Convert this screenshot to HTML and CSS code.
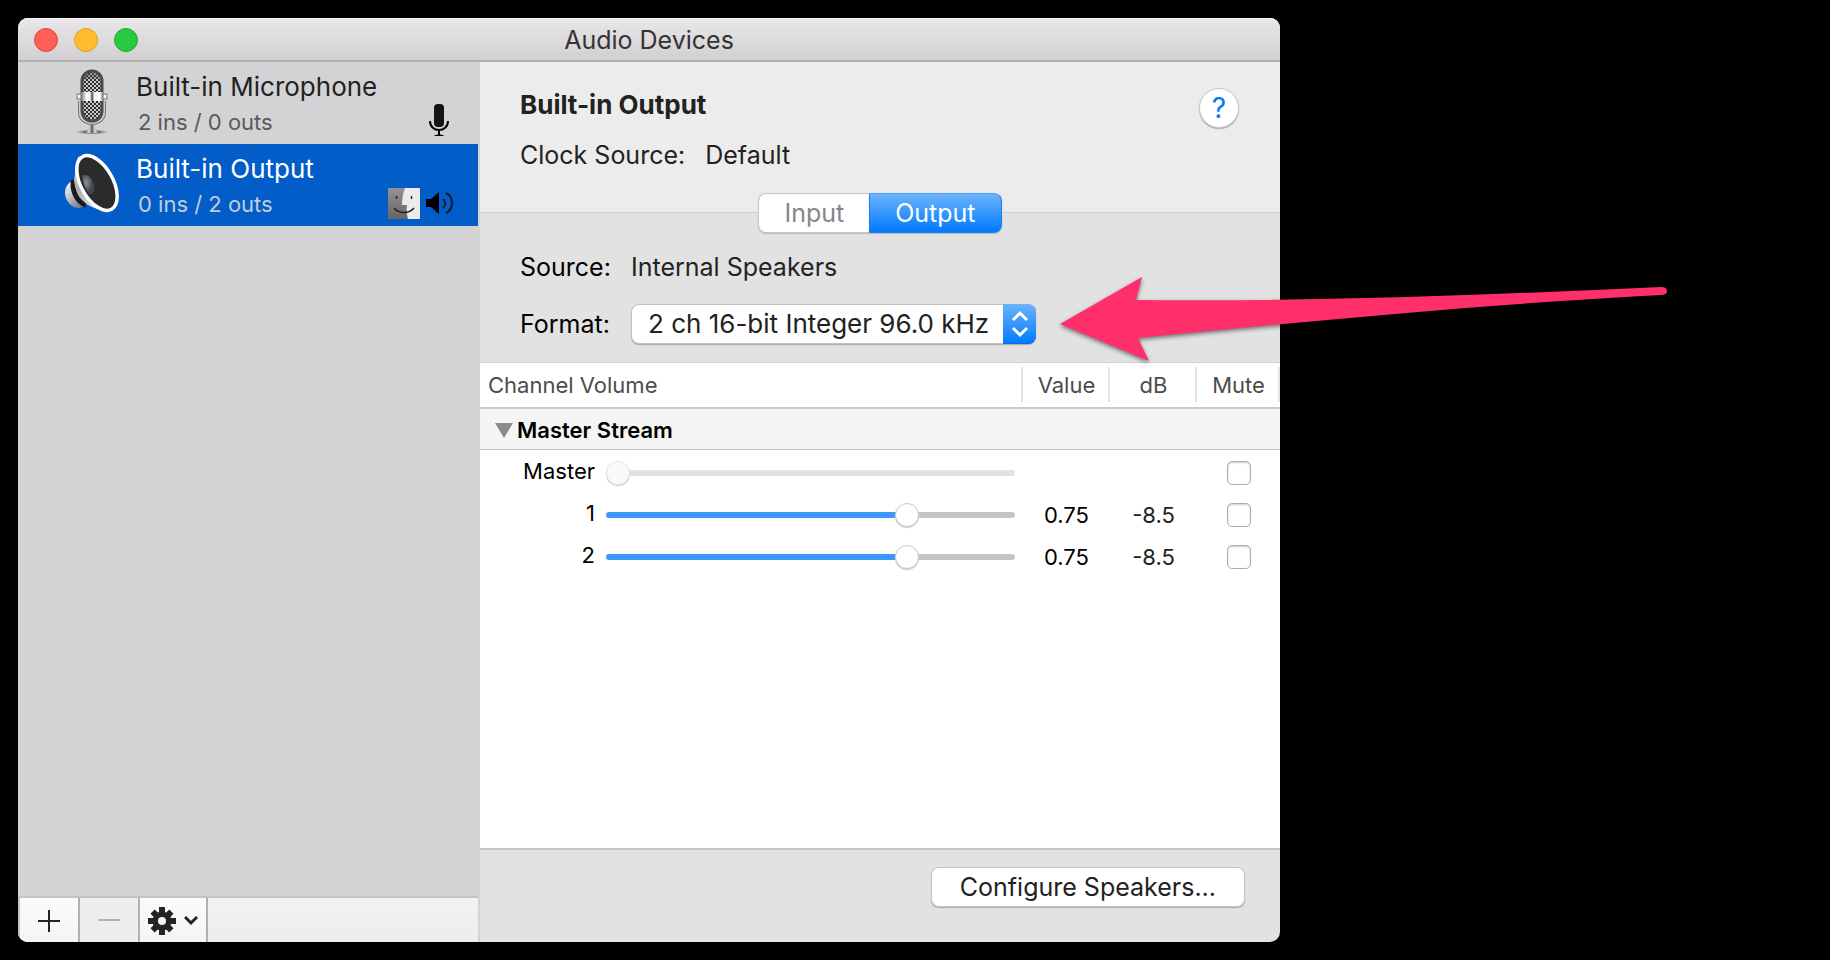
FILE: index.html
```
<!DOCTYPE html>
<html lang="en">
  <head>
    <title>Audio Devices</title>
    <meta charset="UTF-8">
    <meta name="viewport" content="width=device-width, initial-scale=1.0">
    <link rel="stylesheet" href="styles.css">
  </head>
  <body>
    <div class="window">
      <header class="titlebar">
        <div class="lights">
          <button class="light close" aria-label="Close"></button>
          <button class="light minimize" aria-label="Minimize"></button>
          <button class="light zoom" aria-label="Zoom"></button>
        </div>
        <h1>Audio Devices</h1>
      </header>

      <div class="content">
        <aside class="sidebar">
          <ul class="devices">
            <li class="device">
              <svg class="device-icon" width="64" height="72" viewBox="0 0 64 72">
                <defs>
                  <pattern id="mesh" width="4" height="4" patternUnits="userSpaceOnUse">
                    <rect width="4" height="4" fill="#2e2e2e"/>
                    <circle cx="1" cy="1" r="1" fill="#fff"/>
                    <circle cx="3" cy="3" r="1" fill="#fff"/>
                  </pattern>
                  <linearGradient id="chrome">
                    <stop offset="0" stop-color="#777"/>
                    <stop offset=".25" stop-color="#fff"/>
                    <stop offset=".42" stop-color="#eee"/>
                    <stop offset=".5" stop-color="#3a4a4c"/>
                    <stop offset=".6" stop-color="#eee"/>
                    <stop offset=".85" stop-color="#fff"/>
                    <stop offset="1" stop-color="#888"/>
                  </linearGradient>
                  <linearGradient id="stem">
                    <stop offset="0" stop-color="#666"/>
                    <stop offset=".3" stop-color="#ddd"/>
                    <stop offset=".5" stop-color="#555"/>
                    <stop offset=".7" stop-color="#ddd"/>
                    <stop offset="1" stop-color="#666"/>
                  </linearGradient>
                  <radialGradient id="foot">
                    <stop offset="0" stop-color="#444"/>
                    <stop offset=".5" stop-color="#777"/>
                    <stop offset="1" stop-color="#999" stop-opacity="0"/>
                  </radialGradient>
                </defs>
                <ellipse cx="32" cy="65" rx="17" ry="2.500" fill="url(#foot)"/>
                <path d="M28 56h8v6l3 4H25l3-4z" fill="url(#stem)"/>
                <path d="M20 34v11c0 7 5 11 12 11s12-4 12-11V34" fill="none" stroke="#777" stroke-width="4"/>
                <path d="M20 34v11c0 7 5 11 12 11s12-4 12-11V34" fill="none" stroke="#ccc" stroke-width="2"/>
                <rect x="22" y="4" width="20" height="50" rx="10" fill="url(#mesh)" stroke="#4b4b4b" stroke-width="3"/>
                <path d="M22 15c0-13 20-13 20 0-4-5-16-5-20 0z" fill="#555" opacity=".4"/>
                <rect x="21" y="25" width="22" height="9" fill="url(#chrome)"/>
                <path d="M17 27h4v5h-4zM43 27h4v5h-4z" fill="#eee" stroke="#777"/>
              </svg>
              <div class="device-text">
                <div class="device-name">Built-in Microphone</div>
                <div class="device-info">2 ins / 0 outs</div>
              </div>
              <div class="badges mic">
                <svg width="20" height="34" viewBox="0 0 20 34">
                  <rect x="5" y="1" width="10" height="23" rx="4" fill="#141414"/>
                  <path d="M1 18c0 12 18 12 18 0M10 27v5" fill="none" stroke="#000" stroke-width="2"/>
                  <path d="M5 33c1-2 9-2 10 0z" fill="#000"/>
                </svg>
              </div>
            </li>
            <li class="device selected">
              <svg class="device-icon" width="64" height="72" viewBox="0 0 64 72">
                <defs>
                  <linearGradient id="magnet" x1="0" y1="0" x2=".6" y2="1">
                    <stop offset="0" stop-color="#fff"/>
                    <stop offset=".5" stop-color="#c8c8d2"/>
                    <stop offset="1" stop-color="#777783"/>
                  </linearGradient>
                  <linearGradient id="basket" x1="0" y1="0" x2=".7" y2="1">
                    <stop offset="0" stop-color="#ddd"/>
                    <stop offset=".45" stop-color="#aaa"/>
                    <stop offset="1" stop-color="#f4f4f4"/>
                  </linearGradient>
                  <radialGradient id="dome" cx=".35" cy=".4">
                    <stop offset="0" stop-color="#8b9298"/>
                    <stop offset="1" stop-color="#44484c"/>
                  </radialGradient>
                </defs>
                <path d="M15 32c-6 0-10 5-10 12 0 8 7 16 15 15l9-4-8-24z" fill="url(#magnet)"/>
                <path d="M14 31c-3 8 2 22 12 25" fill="none" stroke="#1b1b1f" stroke-width="5"/>
                <path d="M19 7c-4 6-3 14-5 24 1 11 6 19 14 25 8 4 15 6 24 6z" fill="url(#basket)"/>
                <ellipse cx="37" cy="34" rx="16" ry="30" transform="rotate(-29 37 34)" fill="#2b2b2d" stroke="#fff" stroke-width="3.500"/>
                <path d="M22 27c6-4 13 5 12 13 0 5-3 6-5 5-4-5-6-11-7-18z" fill="url(#dome)"/>
              </svg>
              <div class="device-text">
                <div class="device-name">Built-in Output</div>
                <div class="device-info">0 ins / 2 outs</div>
              </div>
              <div class="badges">
                <svg width="32" height="32" viewBox="0 0 32 32">
                  <defs>
                    <linearGradient id="face" x1="0" y1="0" x2="0" y2="1">
                      <stop offset="0" stop-color="#929292"/>
                      <stop offset="1" stop-color="#666"/>
                    </linearGradient>
                  </defs>
                  <rect y="1" width="32" height="31" rx="1" fill="#ececec"/>
                  <path d="M1 1h16c-2 5-3 11-3 17h5c-1 5 0 10 1 14H1a1 1 0 0 1-1-1V2a1 1 0 0 1 1-1z" fill="url(#face)"/>
                  <path d="M8.500 9v3M23.500 9v3" stroke="#222" stroke-width="1.500"/>
                  <path d="M6 21c5 6 15 6 20 0" fill="none" stroke="#222" stroke-width="1.500"/>
                </svg>
                <svg width="28" height="26" viewBox="0 0 28 26">
                  <path d="M0 9h5l8-7v22l-8-7H0z" fill="#000"/>
                  <path d="M17 9c3 2 3 6 0 9M20 3c8 4 8 16 0 20" fill="none" stroke="#141b28" stroke-width="2"/>
                </svg>
              </div>
            </li>
          </ul>
          <div class="toolbar">
            <button class="tool" aria-label="Add device">
              <svg width="22" height="22" viewBox="0 0 22 22"><path d="M11 0v22M0 11h22" stroke="#222" stroke-width="2"/></svg>
            </button>
            <button class="tool" aria-label="Remove device" disabled>
              <svg width="22" height="22" viewBox="0 0 22 22"><path d="M0 10h22" stroke="#b3b3b3" stroke-width="2"/></svg>
            </button>
            <button class="tool gear" aria-label="Device actions">
              <svg width="28" height="28" viewBox="-14 -14 28 28">
                <g fill="#242424">
                  <path d="M-3-14h6v28h-6z"/>
                  <path d="M-3-14h6v28h-6z" transform="rotate(45) scale(1 .95)"/>
                  <path d="M-3-14h6v28h-6z" transform="rotate(90)"/>
                  <path d="M-3-14h6v28h-6z" transform="rotate(135) scale(1 .95)"/>
                  <circle r="9.500"/>
                </g>
                <circle r="4" fill="#f7f7f7"/>
              </svg>
              <svg width="14" height="10" viewBox="0 0 14 10"><path d="M1 1l6 6 6-6" fill="none" stroke="#242424" stroke-width="3"/></svg>
            </button>
          </div>
        </aside>

        <main class="panel">
          <section class="summary">
            <div>
              <h2>Built-in Output</h2>
              <dl class="clock">
                <dt>Clock Source:</dt>
                <dd>Default</dd>
              </dl>
            </div>
            <button class="help" aria-label="Help">?</button>
          </section>

          <section class="stream">
            <div class="tabs">
              <button class="tab" disabled>Input</button>
              <button class="tab active">Output</button>
            </div>
            <div class="settings">
              <span>Source:</span>
              <span class="source">Internal Speakers</span>
              <label for="format">Format:</label>
              <div class="select">
                <select id="format">
                  <option>2 ch 16-bit Integer 96.0 kHz</option>
                </select>
                <svg class="stepper" width="33" height="40" viewBox="0 0 33 40">
                  <path d="M10 16l7-7 7 7M10 24l7 7 7-7" fill="none" stroke="#fff" stroke-width="3"/>
                </svg>
              </div>
            </div>
          </section>

          <section class="channels">
            <table>
              <colgroup>
                <col>
                <col class="col-value">
                <col class="col-value">
                <col class="col-mute">
              </colgroup>
              <thead>
                <tr>
                  <th class="first">Channel Volume</th>
                  <th>Value</th>
                  <th>dB</th>
                  <th>Mute</th>
                </tr>
              </thead>
              <tbody>
                <tr class="group">
                  <th colspan="4">
                    <button class="disclosure">
                      <svg width="18" height="15" viewBox="0 0 18 15"><path d="M0 0h18L9 15z" fill="#8c8c8c"/></svg>
                      Master Stream
                    </button>
                  </th>
                </tr>
                <tr>
                  <td>
                    <div class="channel">
                      <label for="vol-master">Master</label>
                      <input type="range" id="vol-master" min="0" max="1" step="0.01" value="0" style="--level: 0%" disabled>
                    </div>
                  </td>
                  <td></td>
                  <td></td>
                  <td><input type="checkbox" aria-label="Mute master"></td>
                </tr>
                <tr>
                  <td>
                    <div class="channel">
                      <label for="vol-1">1</label>
                      <input type="range" id="vol-1" min="0" max="1" step="0.01" value="0.75" style="--level: 75%">
                    </div>
                  </td>
                  <td>0.75</td>
                  <td class="db">-8.5</td>
                  <td><input type="checkbox" aria-label="Mute channel 1"></td>
                </tr>
                <tr>
                  <td>
                    <div class="channel">
                      <label for="vol-2">2</label>
                      <input type="range" id="vol-2" min="0" max="1" step="0.01" value="0.75" style="--level: 75%">
                    </div>
                  </td>
                  <td>0.75</td>
                  <td class="db">-8.5</td>
                  <td><input type="checkbox" aria-label="Mute channel 2"></td>
                </tr>
              </tbody>
            </table>
          </section>

          <footer class="actions">
            <button class="configure">Configure Speakers...</button>
          </footer>
        </main>
      </div>

      <!-- callout pointing at the format menu -->
      <svg class="arrow" width="620" height="100" viewBox="0 0 620 100">
        <path d="M5 54L87 7l-6 23c175 2 350-5 525-13q6 0 6 4t-6 4C431 34 256 51 83 68l11 23z" fill="#ff2f6c"/>
      </svg>
    </div>
  </body>
</html>
```

FILE: styles.css
```
* {
  box-sizing: border-box;
}
body {
  margin: 0;
  padding: 18px 550px 18px 18px;
  min-height: 100vh;
  display: flex;
  background: #000;
  color: #222;
  font-family: Inter, "Liberation Sans", sans-serif;
  font-size: 25px;
  line-height: 32px;
}
button, select, input {
  margin: 0;
  padding: 0;
  border: none;
  font: inherit;
  color: inherit;
}
h1, h2, ul, dl, dd {
  margin: 0;
  padding: 0;
}
svg {
  display: block;
  flex: none;
}
.window {
  position: relative;
  flex: 1;
  min-width: 0;
  display: flex;
  flex-direction: column;
  border-radius: 10px;
  background: #e2e2e2;
}

/* title bar */
.titlebar {
  display: grid;
  grid-template-columns: 1fr auto 1fr;
  align-items: center;
  height: 44px;
  padding: 2px 16px 0;
  border-bottom: 2px solid #b1afb1;
  border-radius: 10px 10px 0 0;
  background: linear-gradient(#e9e7e9, #d1cfd1);
  box-shadow: inset 0 1px #f6f5f6;
}
.titlebar h1 {
  font-size: 25px;
  font-weight: 400;
  color: #333;
}
.lights {
  display: flex;
  gap: 16px;
}
.light {
  width: 24px;
  height: 24px;
  border-radius: 50%;
}
.close {
  background: #ff5f58;
  border: 1px solid #e2463f;
}
.minimize {
  background: #ffbd2e;
  border: 1px solid #dfa023;
}
.zoom {
  background: #28ca42;
  border: 1px solid #1dac2b;
}
.content {
  flex: 1;
  display: flex;
}

/* device list */
.sidebar {
  flex: 0 0 462px;
  display: flex;
  flex-direction: column;
  border-right: 2px solid #d4d4d4;
  border-radius: 0 0 0 10px;
  background: #d3d2d5;
  overflow: hidden;
}
.devices {
  flex: 1;
  list-style: none;
}
.device {
  display: flex;
  height: 82px;
  padding: 5px 24px 5px 42px;
}
.device-text {
  flex: 1;
  padding: 4px 0 0 12px;
}
.device-name {
  font-size: 26px;
  white-space: nowrap;
}
.device-info {
  padding: 3px 0 0 2px;
  font-size: 22px;
  color: #5a5a5c;
}
.selected {
  background: #025dc9;
  color: #fff;
}
.selected .device-info {
  color: #c5cbdc;
}
.badges {
  display: flex;
  align-items: center;
  align-self: flex-end;
  gap: 6px;
  padding-bottom: 2px;
}
.badges.mic {
  padding-right: 5px;
}
.toolbar {
  display: flex;
  height: 46px;
  border-top: 2px solid #c4c4c4;
  border-left: 2px solid #c4c4c4;
  background: linear-gradient(#f2f2f2, #ededed);
}
.tool {
  display: flex;
  align-items: center;
  justify-content: center;
  gap: 8px;
  width: 60px;
  padding-top: 2px;
  border-right: 2px solid #b1b1b1;
  background: linear-gradient(#fbfbfb, #f4f4f4);
}
.tool:disabled {
  background: #eee;
}
.tool.gear {
  width: 68px;
}

/* right panel */
.panel {
  flex: 1;
  min-width: 0;
  display: flex;
  flex-direction: column;
}
.summary {
  display: flex;
  justify-content: space-between;
  align-items: flex-start;
  height: 151px;
  padding: 26px 41px 0 40px;
  border-bottom: 1px solid #cfcfcf;
  background: #ececec;
}
.summary h2 {
  padding-top: 1px;
  font-size: 26px;
  font-weight: 700;
}
.clock {
  display: flex;
  gap: 20px;
  padding-top: 18px;
}
.help {
  width: 40px;
  height: 40px;
  border: 1px solid #c8c8c8;
  border-radius: 50%;
  background: #fff;
  box-shadow: 0 1px 1px #aaa;
  color: #007aff;
  font-size: 28px;
}
.stream {
  padding-bottom: 18px;
  border-bottom: 1px solid #cfcfcf;
}
/* the tabs sit across the line above */
.tabs {
  display: flex;
  justify-content: center;
  margin-top: -20px;
}
.tab {
  height: 40px;
  padding: 0 25px;
  border: 1px solid #c4c4c4;
  border-right: none;
  border-radius: 8px 0 0 8px;
  background: #fff;
  box-shadow: 0 1px 1px #bbb;
}
.tab:disabled {
  color: #868686;
}
.tab.active {
  border: 1px solid #1a7ff5;
  border-top-color: #4a9ef0;
  border-radius: 0 8px 8px 0;
  background: linear-gradient(#6cb3fa, #007aff);
  color: #fff;
}
.settings {
  display: grid;
  grid-template-columns: 93px auto;
  justify-content: start;
  align-items: center;
  gap: 21px 18px;
  padding: 18px 40px 0;
  color: #000;
}
.source {
  color: #222;
}
.select {
  position: relative;
}
.select select {
  appearance: none;
  height: 40px;
  padding: 0 45px 0 16px;
  border: 1px solid #c0c0c0;
  border-radius: 8px;
  background: #fff;
  box-shadow: 0 1px 1px #aaa;
  color: #222;
  font-size: 26px;
}
.stepper {
  position: absolute;
  top: 0;
  right: 0;
  border-radius: 0 8px 8px 0;
  background: linear-gradient(#6cb3fa, #007aff);
  box-shadow: inset 0 -1px #0a6ae8;
  pointer-events: none;
}

/* channel table */
.channels {
  flex: 1;
  background: #fff;
  color: #000;
  font-size: 22px;
}
table {
  width: 100%;
  table-layout: fixed;
  border-collapse: separate;
  border-spacing: 0;
}
.col-value {
  width: 87px;
}
.col-mute {
  width: 83px;
}
th, td {
  padding: 0;
  text-align: center;
}
thead th {
  height: 46px;
  border-bottom: 2px solid #c8c8c8;
  background: linear-gradient(#e2e2e2, #e2e2e2) no-repeat right 4px / 2px 35px;
  color: #4c4c4c;
  font-weight: 400;
}
thead .first {
  padding-left: 8px;
  text-align: left;
}
.group th {
  height: 41px;
  border-bottom: 1px solid #c4c4c4;
  background: #f5f5f5;
  text-align: left;
}
.disclosure {
  display: flex;
  align-items: center;
  gap: 4px;
  padding: 2px 0 0 15px;
  background: none;
  font-weight: 600;
}
td {
  height: 42px;
  padding-top: 4px;
}
.db {
  color: #222;
}
.channel {
  display: flex;
  align-items: center;
  padding-right: 8px;
}
.channel label {
  width: 115px;
  margin-right: 11px;
  padding-bottom: 4px;
  text-align: right;
}
input[type="range"] {
  --fill: #3b99fc;
  --rest: #c4c4c4;
  appearance: none;
  flex: 1;
  min-width: 0;
  height: 24px;
  background: none;
}
input[type="range"]::-webkit-slider-runnable-track {
  height: 6px;
  border-radius: 3px;
  background: linear-gradient(to right, var(--fill) var(--level), var(--rest) var(--level));
}
input[type="range"]::-webkit-slider-thumb {
  appearance: none;
  width: 24px;
  height: 24px;
  margin-top: -9px;
  border: 1px solid #c8c8c8;
  border-radius: 50%;
  background: #fff;
  box-shadow: 0 1px 1px #ccc;
}
input[type="range"]:disabled {
  --rest: #e2e2e2;
}
input[type="range"]:disabled::-webkit-slider-thumb {
  border-color: #e6e6e6;
  background: #fafafa;
}
input[type="checkbox"] {
  appearance: none;
  display: block;
  width: 24px;
  height: 24px;
  margin: 0 auto;
  border: 1px solid #adadad;
  border-radius: 5px;
  background: #fff;
  box-shadow: inset 0 1px 2px #ccc;
}
.actions {
  display: flex;
  justify-content: flex-end;
  height: 94px;
  padding: 17px 35px 0;
  border-top: 2px solid #c4c4c4;
}
.configure {
  height: 40px;
  padding: 0 28px;
  border: 1px solid #c4c4c4;
  border-radius: 8px;
  background: #fff;
  box-shadow: 0 1px 1px #aaa;
}

.arrow {
  position: absolute;
  top: 252px;
  right: -395px;
  filter: drop-shadow(0 2px 2px rgba(0, 0, 0, 0.5));
}
```
